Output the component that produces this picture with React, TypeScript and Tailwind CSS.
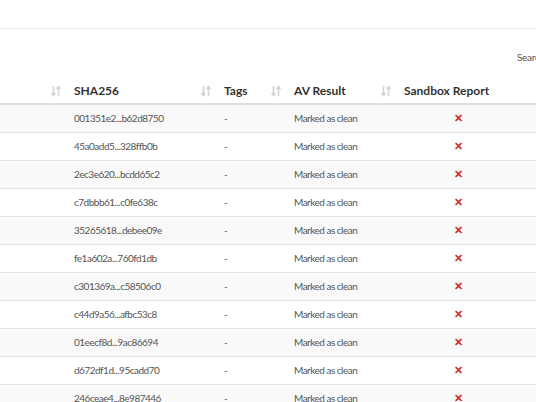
import React from 'react';

const rows = [
  '001351e2...b62d8750',
  '45a0add5...328ffb0b',
  '2ec3e620...bcdd65c2',
  'c7dbbb61...c0fe638c',
  '35265618...debee09e',
  'fe1a602a...760fd1db',
  'c301369a...c58506c0',
  'c44d9a56...afbc53c8',
  '01eecf8d...9ac86694',
  'd672df1d...95cadd70',
  '246ceae4...8e987446',
];

const SortIcon: React.FC = () => (
  <svg width="10" height="11" viewBox="0 0 10 11" className="absolute right-[4px] top-1/2 -translate-y-1/2" fill="none" stroke="#d4d4d4" strokeWidth="1.6">
    <path d="M2.5 0.5 V10 M0.5 7.5 L2.5 10 L4.5 7.5" />
    <path d="M7.5 10.5 V1 M5.5 3.5 L7.5 1 L9.5 3.5" />
  </svg>
);

const Th: React.FC<{ children?: React.ReactNode; className?: string; sort?: boolean }> = ({ children, className = '', sort = true }) => (
  <th className={`relative h-[26px] px-[9px] text-left font-bold text-[12px] text-[#333] ${className}`}>
    {children}
    {sort && <SortIcon />}
  </th>
);

const App: React.FC = () => {
  return (
    <div className="w-[536px] h-[402px] overflow-hidden bg-white" style={{ fontFamily: 'Lato, "Open Sans", sans-serif' }}>
      <div className="h-[29px] border-b border-[#ececec]" />
      <div className="h-[49px] relative">
        <span className="absolute left-[517px] top-[21px] text-[10px] tracking-[-0.3px] text-[#555] whitespace-nowrap">Search:</span>
      </div>
      <table className="border-collapse table-fixed w-[620px]">
        <colgroup>
          <col className="w-[65px]" />
          <col className="w-[150px]" />
          <col className="w-[70px]" />
          <col className="w-[110px]" />
          <col className="w-[124px]" />
          <col className="w-[101px]" />
        </colgroup>
        <thead>
          <tr className="border-b-2 border-[#dedede]">
            <Th />
            <Th>SHA256</Th>
            <Th>Tags</Th>
            <Th>AV Result</Th>
            <Th className="text-center" sort={false}>Sandbox Report</Th>
            <Th />
          </tr>
        </thead>
        <tbody>
          {rows.map((h, i) => (
            <tr key={h} className={`h-[28px] border-t border-[#e2e2e2] text-[10px] tracking-[-0.5px] text-[#555] ${i % 2 === 0 ? 'bg-[#f9f9f9]' : 'bg-white'}`}>
              <td />
              <td className="px-[9px]">{h}</td>
              <td className="px-[9px]">-</td>
              <td className="px-[9px]">Marked as clean</td>
              <td className="text-center pl-[2px]">
                <span className="text-[#c9302c] font-bold text-[11px]">✕</span>
              </td>
              <td />
            </tr>
          ))}
        </tbody>
      </table>
    </div>
  );
};

export default App;
